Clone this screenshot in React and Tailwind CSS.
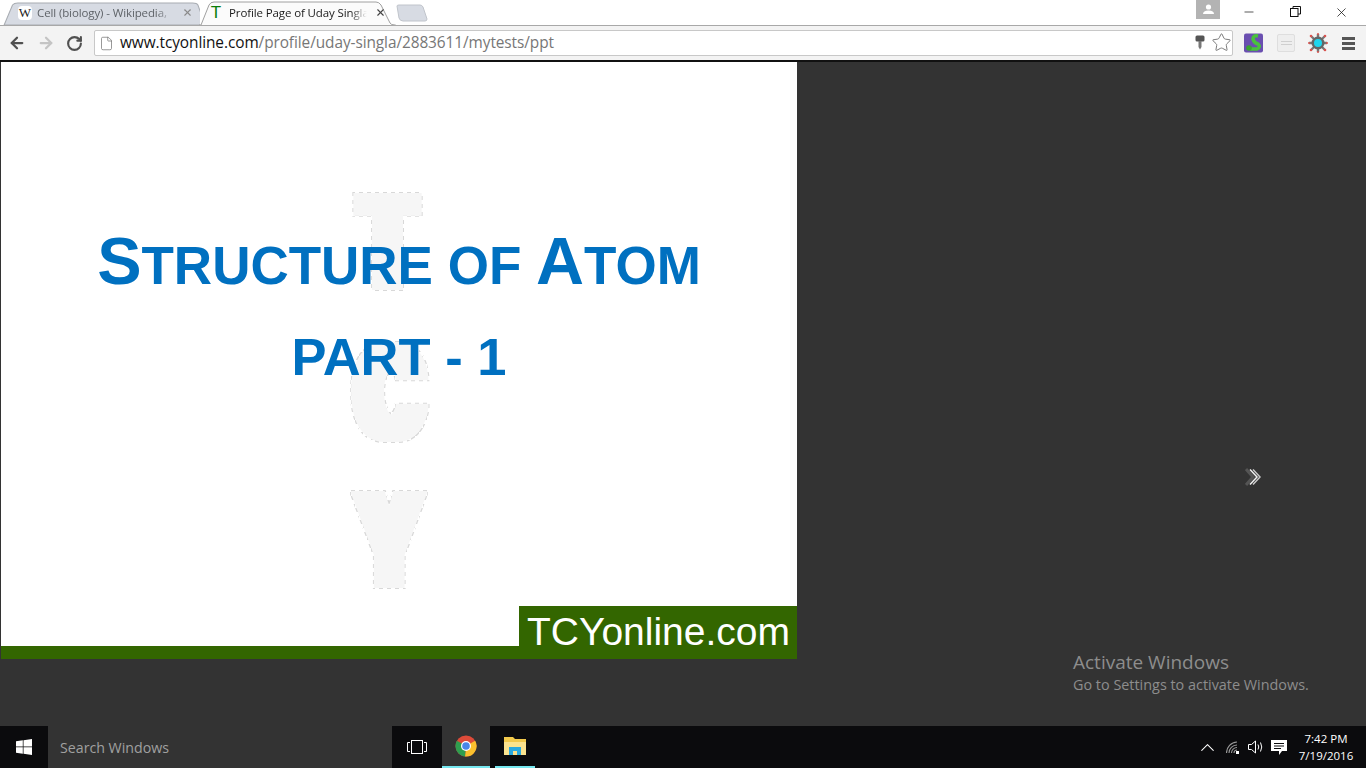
import React from "react";
import { ArrowLeft, ArrowRight, RotateCw, File, Star, X, Minus, ChevronUp } from "lucide-react";

const Tab = ({ active, icon, title, width, closeX }) => (
  <div className={`relative h-[24px] flex items-center ${width}`}>
    <svg className="absolute inset-0 w-full h-[25px]" viewBox={active ? "0 0 200 25" : "0 0 190 25"} preserveAspectRatio="none">
      {active ? (
        <path d="M0 25 L1 24 L3 24 L11 4 Q12.500 1 16 1 L178 1 Q181 1 183 4 L192 22 Q193 24 197 24 L200 25 Z" fill="#fbfbfb" stroke="#a0a0a0" strokeWidth="1" />
      ) : (
        <path d="M3 24 L11 4 Q12.500 2 16 2 L183 2 Q187 2 188 4 L195 24 Z" fill="#d7dbe3" stroke="#a8acb2" strokeWidth="1" />
      )}
    </svg>
    <div className={`relative flex items-center w-full ${active ? "pl-[11px]" : "pl-[17px]"}`}>
      {icon}
      <span className={`text-[11.500px] tracking-[-0.010em] font-['Open_Sans',sans-serif] whitespace-nowrap overflow-hidden [mask-image:linear-gradient(to_right,black_88%,transparent)] ${active ? "ml-[6px] text-[#1a1a1a] w-[138px]" : "ml-[5px] text-[#5f6368] w-[136px]"}`}>{title}</span>
      <X size={11} strokeWidth={2.4} className={`absolute top-[3px] ${closeX} ${active ? "text-[#444]" : "text-[#8a8a8a]"}`} />
    </div>
  </div>
);

const Watermark = () => (
  <svg className="absolute left-[330px] top-[110px]" width="130" height="440" viewBox="0 0 130 440">
    <defs>
      <filter id="wm" filterUnits="userSpaceOnUse" x="0" y="0" width="130" height="440" colorInterpolationFilters="sRGB">
        <feMorphology in="SourceAlpha" operator="dilate" radius="7 0.5" result="fat" />
        <feMorphology in="fat" operator="dilate" radius="1" result="outer" />
        <feComposite in="outer" in2="fat" operator="out" result="ring" />
        <feFlood floodColor="#d8d8d8" x="0" y="0" width="4" height="4" result="a" />
        <feFlood floodColor="#d8d8d8" x="4" y="4" width="4" height="4" result="b" />
        <feMerge x="0" y="0" width="8" height="8" result="tile"><feMergeNode in="a" /><feMergeNode in="b" /></feMerge>
        <feTile in="tile" x="0" y="0" width="130" height="440" result="checker" />
        <feComposite in="checker" in2="ring" operator="in" result="dashes" />
        <feFlood floodColor="#f6f6f6" x="0" y="0" width="130" height="440" result="bg" />
        <feComposite in="bg" in2="fat" operator="in" result="body" />
        <feMerge><feMergeNode in="body" /><feMergeNode in="dashes" /></feMerge>
      </filter>
    </defs>
    <g filter="url(#wm)" fill="#000" style={{ fontFamily: 'Inter, "DejaVu Sans", sans-serif', fontWeight: 900 }}>
      <text transform="translate(27 117) scale(0.860 1.310)" fontSize="100">T</text>
      <text transform="translate(24 268) scale(0.930 1.320)" fontSize="100">C</text>
      <text transform="translate(25 415) scale(0.850 1.310)" fontSize="100">Y</text>
    </g>
  </svg>
);

export default function App() {
  return (
    <div className="w-[1366px] h-[768px] overflow-hidden flex flex-col bg-[#333333] font-['Liberation_Sans',Arial,sans-serif]">
      <div className="h-[25px] flex items-start bg-white relative shrink-0">
        <div className="flex items-end pl-[1px] h-[25px]">
          <Tab width="w-[199px]" closeX="left-[181px]" title="Cell (biology) - Wikipedia,"
            icon={<span className="w-[14px] h-[14px] bg-white rounded-sm text-[13px] leading-[14px] text-center text-[#222] font-['Liberation_Serif',serif]">W</span>} />
          <div className="-ml-[2px]"><Tab active width="w-[200px]" closeX="left-[177px]" title="Profile Page of Uday Singla"
            icon={<span className="w-[14px] text-center text-[17px] leading-[16px] text-[#0a7d0a]">T</span>} /></div>
          <svg width="36" height="20" viewBox="0 0 36 20" className="-ml-[4px] mb-[2px]">
            <path d="M3 3 Q3 2 5 2 L26 2 Q28 2 29 4 L33 16 Q33 18 31 18 L9 18 Q6 18 5 15 Z" fill="#d7dbe3" stroke="#c0c4cb" />
          </svg>
        </div>
        <div className="ml-auto flex items-start h-[25px] pr-[1px]">
          <div className="w-[24px] h-[19px] bg-[#b3b3b3] flex items-center justify-center mr-[5px]">
            <svg width="13" height="11" viewBox="0 0 13 11"><circle cx="6.500" cy="3" r="2.600" fill="#fff" /><path d="M1 10 Q1 6.500 6.500 6.500 Q12 6.500 12 10 Z" fill="#fff" /></svg>
          </div>
          <div className="w-[48px] h-[25px] flex justify-center pt-[5px]"><Minus size={14} strokeWidth={1.200} className="text-[#111]" /></div>
          <div className="w-[45px] h-[25px] flex justify-center pt-[6px]">
            <svg width="11" height="11" viewBox="0 0 11 11" fill="none" stroke="#111"><rect x="0.500" y="2.500" width="7.500" height="8" /><path d="M3 2.500 V0.500 H10.500 V8 H8" /></svg>
          </div>
          <div className="w-[47px] h-[25px] flex justify-center pt-[5px]"><X size={15} strokeWidth={1.200} className="text-[#111]" /></div>
        </div>
      </div>

      <div className="h-[35px] shrink-0 bg-[#f3f3f3] border-t border-[#a8a8a8] flex items-center relative">
        <ArrowLeft size={18} strokeWidth={3} className="ml-[8px] text-[#505050]" />
        <ArrowRight size={18} strokeWidth={3} className="ml-[11px] text-[#c4c4c4]" />
        <RotateCw size={17} strokeWidth={3} className="ml-[11px] text-[#505050]" />
        <div className="ml-[11px] w-[1139px] h-[26px] bg-white border border-[#c8c8c8] rounded-[2px] flex items-center relative">
          <File size={15} strokeWidth={1.200} className="ml-[4px] text-[#777]" />
          <span className="ml-[6px] pb-[1px] text-[15.400px] tracking-[-0.005em] text-[#111] font-['Open_Sans',sans-serif]">www.tcyonline.com<span className="text-[#777]">/profile/uday-singla/2883611/mytests/ppt</span></span>
          <svg width="10" height="15" viewBox="0 0 10 15" className="absolute right-[27px] top-[4px]">
            <rect x="0.500" y="0.500" width="9" height="6" rx="1.500" fill="#555" />
            <path d="M3.500 6 H6.500 V12 L5 14.500 L3.500 12 Z" fill="#777" />
          </svg>
          <Star size={21} strokeWidth={1.100} className="absolute right-[0px] top-[1px] text-[#777]" />
        </div>
        <svg className="ml-[11px]" width="20" height="20" viewBox="0 0 20 20">
          <rect width="19" height="19" y="0.500" rx="2" fill="#6a4fb0" />
          <path d="M14 3 Q9 2 9 6 Q10 10 14 11 Q17 14 13 16 L6 16" fill="none" stroke="#49c23c" strokeWidth="3.500" />
          <circle cx="5" cy="15" r="2.800" fill="#3aa52f" />
        </svg>
        <div className="ml-[13px] w-[18px] h-[18px] rounded-[2px] bg-[#eeeeee] border border-[#dedede] flex flex-col gap-[2px] justify-center items-center">
          <div className="w-[11px] h-px bg-[#cfcfcf]" /><div className="w-[11px] h-px bg-[#cfcfcf]" />
        </div>
        <svg className="ml-[13px]" width="20" height="20" viewBox="0 0 20 20">
          <g stroke="#777" strokeWidth="2.400">
            <path d="M10 1 V19 M1 10 H19 M3.500 3.500 L16.500 16.500 M16.500 3.500 L3.500 16.500" />
          </g>
          <circle cx="10" cy="10" r="6.500" fill="#666" />
          <circle cx="10" cy="10" r="4" fill="#1fd6ee" />
          <g fill="#d9534f"><circle cx="3" cy="3" r="1.300" /><circle cx="17" cy="3" r="1.300" /><circle cx="3" cy="17" r="1.300" /><circle cx="17" cy="17" r="1.300" /><circle cx="10" cy="1" r="1" /><circle cx="19" cy="10" r="1" /><circle cx="1" cy="10" r="1" /><circle cx="10" cy="19" r="1" /></g>
        </svg>
        <div className="ml-[14px] w-[13px] flex flex-col gap-[2px]">
          <div className="h-[3px] bg-[#555]" /><div className="h-[3px] bg-[#555]" /><div className="h-[3px] bg-[#555]" />
        </div>
      </div>
      <div className="h-[2px] shrink-0 bg-[#111]" />

      <div className="relative flex-1 bg-[#333333]">
        <div className="relative ml-px w-[796px] h-[597px] bg-white overflow-hidden">
          <Watermark />
          <div className="absolute left-0 top-[166px] w-[796px] text-center text-[#0070c0] font-bold leading-none whitespace-nowrap">
            <span className="text-[66.500px]">S</span><span className="text-[53px]">TRUCTURE OF </span><span className="text-[66.500px]">A</span><span className="text-[53px]">TOM</span>
          </div>
          <div className="absolute left-0 top-[269px] w-[796px] text-center text-[#0070c0] font-bold text-[52.500px] leading-none">PART - 1</div>
          <div className="absolute left-0 right-0 bottom-0 h-[13px] bg-[#336600]" />
          <div className="absolute right-0 bottom-0 w-[278px] h-[53px] bg-[#336600] flex items-center justify-center text-white text-[39px] leading-none pb-[3px] pl-[1px]">TCYonline.com</div>
        </div>
        <svg className="absolute left-[1245px] top-[406px]" width="16" height="18" viewBox="0 0 16 18" fill="none">
          <path d="M1 1 L8 9 L1 17" stroke="#555" strokeWidth="3" />
          <path d="M5 1.500 L12 9 L5 16.500" stroke="#f0f0f0" strokeWidth="1.500" />
          <path d="M8 1.500 L15 9 L8 16.500" stroke="#c8c8c8" strokeWidth="1.500" />
        </svg>
        <div className="absolute left-[1073px] top-[587px] text-[#8d8d8d] font-['Open_Sans',sans-serif]">
          <div className="text-[19px] leading-[26px]">Activate Windows</div>
          <div className="text-[14.400px] leading-[20px]">Go to Settings to activate Windows.</div>
        </div>
      </div>

      <div className="h-[42px] shrink-0 bg-[#0b0b0d] flex items-stretch text-white font-['Open_Sans',sans-serif]">
        <div className="w-[48px] flex items-center justify-center">
          <svg width="16" height="16" viewBox="0 0 16 16" fill="#fff"><path d="M0 2.300 L6.800 1.300 V7.600 H0 Z M7.500 1.200 L16 0 V7.600 H7.500 Z M0 8.300 H6.800 V14.700 L0 13.700 Z M7.500 8.300 H16 V16 L7.500 14.800 Z" /></svg>
        </div>
        <div className="w-[344px] bg-[#333333] flex items-center pl-[12px] pt-[2px] text-[14.200px] text-[#a0a0a0]">Search Windows</div>
        <div className="w-[50px] flex items-center justify-center">
          <svg width="20" height="14" viewBox="0 0 20 14" fill="none" stroke="#fff"><rect x="4.500" y="0.500" width="11" height="13" /><path d="M3 2.500 H0.500 V11.500 H3 M17 2.500 H19.500 V11.500 H17" /></svg>
        </div>
        <div className="w-[48px] bg-[#333333] border-b-[2px] border-[#76e8f0] flex items-center justify-center">
          <svg width="22" height="22" viewBox="0 0 22 22">
            <circle cx="11" cy="11" r="10.500" fill="#dd4b39" />
            <path d="M11 11 L20.100 5.700 A10.500 10.500 0 0 1 10 21.500 Z" fill="#fbc02d" />
            <path d="M11 11 L10 21.500 A10.500 10.500 0 0 1 1.900 5.700 Z" fill="#2e9e4f" />
            <circle cx="11" cy="11" r="5" fill="#fff" />
            <circle cx="11" cy="11" r="3.800" fill="#4a86e8" />
          </svg>
        </div>
        <div className="w-[5px]" />
        <div className="w-[40px] border-b-[2px] border-[#76e8f0] flex items-center justify-center">
          <svg width="22" height="20" viewBox="0 0 22 20">
            <path d="M0 1 H9 L11 3 H22 V19 H0 Z" fill="#f2c94c" />
            <path d="M0 6 H22 V19 H0 Z" fill="#fbe38e" />
            <path d="M5 19 V11 H17 V19 H13 V15 H9 V19 Z" fill="#2aa9e0" />
          </svg>
        </div>
        <div className="ml-auto flex items-center">
          <ChevronUp size={23} strokeWidth={1.100} className="mr-[7px] text-white" />
          <svg width="14" height="13" viewBox="0 0 14 13" fill="none" stroke="#9a9a9a" strokeWidth="1.100" className="mr-[8px]">
            <path d="M0.500 12 A11 11 0 0 1 11 1 M3 12 A8 8 0 0 1 11 4 M5.500 12 A5.500 5.500 0 0 1 11 6.500 M8 12 A3 3 0 0 1 11 9" />
            <rect x="10" y="10" width="3" height="3" fill="#fff" stroke="none" />
          </svg>
          <svg width="17" height="14" viewBox="0 0 17 14" fill="none" stroke="#fff" className="mr-[6px]">
            <path d="M0.500 4.500 H3.500 L7.500 1 V13 L3.500 9.500 H0.500 Z" />
            <path d="M10 4.500 Q11.500 7 10 9.500 M12.500 2.500 Q15 7 12.500 11.500" />
          </svg>
          <svg width="16" height="15" viewBox="0 0 16 15" fill="#fff" className="mr-[5px]">
            <path fillRule="evenodd" d="M0 0 H16 V11 H11 L8 15 L8 11 H0 Z M3 3 V4 H13 V3 Z M3 5.500 V6.500 H13 V5.500 Z M3 8 V9 H10 V8 Z" />
          </svg>
          <div className="w-[68px] text-center text-[11.500px] leading-[17px] mr-[6px] text-white">
            <div>7:42 PM</div><div>7/19/2016</div>
          </div>
        </div>
      </div>
    </div>
  );
}
